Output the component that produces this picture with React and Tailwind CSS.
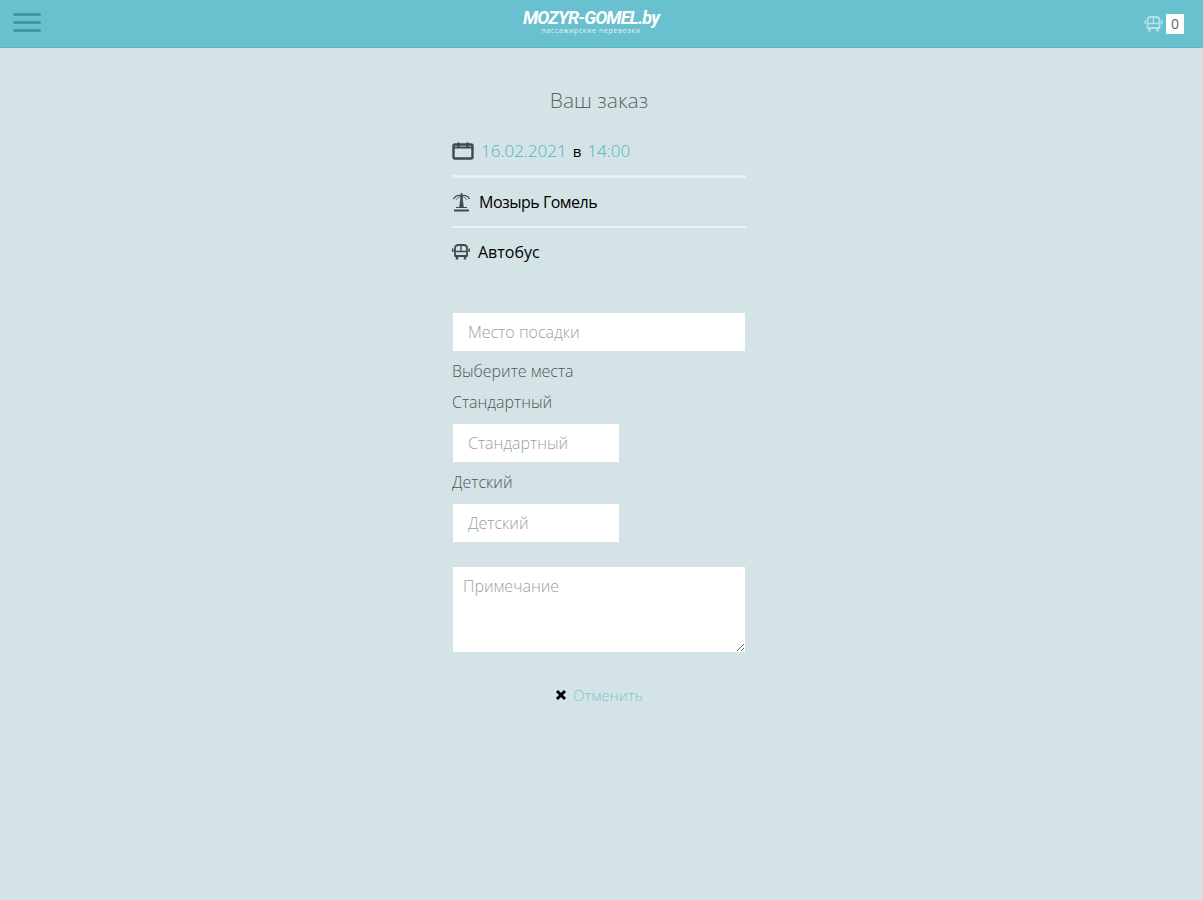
import React from 'react';

const font = { fontFamily: '"Open Sans", sans-serif' };

const BusIcon = ({ className }) => (
  <svg viewBox="0 0 18 18" className={className} fill="none" stroke="currentColor" strokeWidth="1.800">
    <path d="M3 5c0-2 1.500-3 3.500-3h5c2 0 3.500 1 3.500 3v8H3z" strokeLinejoin="round" />
    <path d="M3 8.500h12M9 2.500v6" strokeWidth="1.400" />
    <path d="M0.800 5.500v3.500M17.200 5.500v3.500" strokeWidth="1.500" />
    <path d="M5 13v3.500M13 13v3.500" strokeWidth="2.400" />
  </svg>
);

const CalendarIcon = () => (
  <svg viewBox="0 0 22 18" className="w-[22px] h-[18px] text-[#3f4a4d]" fill="none" stroke="currentColor">
    <rect x="1.500" y="2.500" width="19" height="14" rx="1.500" strokeWidth="2.400" />
    <path d="M1 5.500h20" strokeWidth="2" />
    <path d="M6.500 0.500v5M15.500 0.500v5" strokeWidth="2.400" />
  </svg>
);

const RoadIcon = () => (
  <svg viewBox="0 0 20 20" className="w-5 h-5 text-[#3f4a4d]" fill="none" stroke="currentColor">
    <path d="M1.500 7C3 4 6 3 9.500 3.500M17.500 7C16 4 13 3 9.500 3.500" strokeWidth="1.300" />
    <path d="M4 8c1-2 3-3 5.500-3.500M15 8c-1-2-3-3-5.500-3.500" strokeWidth="1" opacity="0.7" />
    <path d="M9.500 1v3" strokeWidth="1.500" />
    <path d="M8.800 4 7.500 15.500h4L10.200 4z" fill="currentColor" strokeWidth="0.500" />
    <path d="M4 15.500h11" strokeWidth="1" />
    <path d="M2 18.500h15" strokeWidth="2" />
  </svg>
);

const Header = () => (
  <header className="h-12 bg-[#69c0ce] border-b border-[#5cb8c8] flex items-center justify-between pl-[13px] pr-[19px] shrink-0">
    <button className="w-[28px] flex flex-col gap-[5px] -mt-[2px]">
      <span className="h-[3px] bg-[#3f97a6] rounded-sm" />
      <span className="h-[3px] bg-[#3f97a6] rounded-sm" />
      <span className="h-[3px] bg-[#3f97a6] rounded-sm" />
    </button>
    <div className="flex flex-col items-center text-white ml-[-3px] -mt-[7px]">
      <span className="text-[18px] leading-[21px] font-bold italic tracking-[-0.9px]" style={{ fontFamily: 'Roboto, sans-serif' }}>MOZYR-GOMEL.by</span>
      <span className="text-[7px] leading-[6px] text-[#e3f4f6] tracking-[0.6px] font-normal">пассажирские перевозки</span>
    </div>
    <div className="flex items-center gap-[3px]">
      <BusIcon className="w-[19px] h-[18px] text-[#b6e3ea]" />
      <span className="w-[18px] h-[20px] bg-white text-[#5d686b] text-sm font-normal flex items-center justify-center">0</span>
    </div>
  </header>
);

const inputCls = 'h-[38px] bg-white px-[15px] text-base font-light placeholder:text-[#9aa1a3] outline-none block';

const App = () => (
  <div className="min-h-[900px] bg-[#d4e3e5] flex flex-col font-light text-[#4d5759]" style={font}>
    <Header />
    <main className="flex justify-center pr-[5px]">
      <div className="w-[294px] flex flex-col">
        <h1 className="text-[21px] font-light text-[#5c6466] text-center mt-[37px] mb-[1px] leading-[30px]">Ваш заказ</h1>
        <div className="flex items-center gap-[7px] mt-[23px] h-[24px] text-[17px] font-light">
          <CalendarIcon />
          <span className="flex items-baseline">
            <span className="text-[#4fb3c4]">16.02.2021</span>
            <span className="text-black text-[15px] font-normal mx-[6px]">в</span>
            <span className="text-[#4fb3c4]">14:00</span>
          </span>
        </div>
        <div className="mt-[12px] h-[3px] bg-[#e8f0f1]" />
        <div className="flex items-center gap-[7px] h-[48px] text-base font-normal text-black tracking-[-0.5px]">
          <RoadIcon />
          <span>Мозырь Гомель</span>
        </div>
        <div className="h-[2px] bg-[#eef4f5]" />
        <div className="flex items-center gap-2 h-[48px] text-base font-normal text-black">
          <BusIcon className="w-[18px] h-[18px] text-[#3f4a4d]" />
          <span>Автобус</span>
        </div>
        <div className="mt-[37px] flex flex-col pl-[1px] pr-[1px]">
          <input className={`${inputCls} w-full`} placeholder="Место посадки" />
          <label className="text-base leading-[20px] mt-[10px] -ml-[1px]">Выберите места</label>
          <label className="text-base leading-[20px] mt-[11px] -ml-[1px]">Стандартный</label>
          <input className={`${inputCls} w-[166px] mt-[12px]`} placeholder="Стандартный" />
          <label className="text-base leading-[20px] mt-[10px] -ml-[1px]">Детский</label>
          <input className={`${inputCls} w-[166px] mt-[12px]`} placeholder="Детский" />
          <textarea className="h-[85px] w-full bg-white mt-[25px] px-[10px] py-[7px] text-base font-light placeholder:text-[#9aa1a3] outline-none block" placeholder="Примечание" />
        </div>
        <div className="flex items-center justify-center gap-[6px] mt-[33px] h-[20px] text-[15px]">
          <svg viewBox="0 0 12 12" className="w-3 h-3 text-black" fill="none" stroke="currentColor" strokeWidth="3">
            <path d="M2 2l8 8M10 2l-8 8" />
          </svg>
          <a className="text-[#7cc6d3]">Отменить</a>
        </div>
      </div>
    </main>
  </div>
);

export default App;
